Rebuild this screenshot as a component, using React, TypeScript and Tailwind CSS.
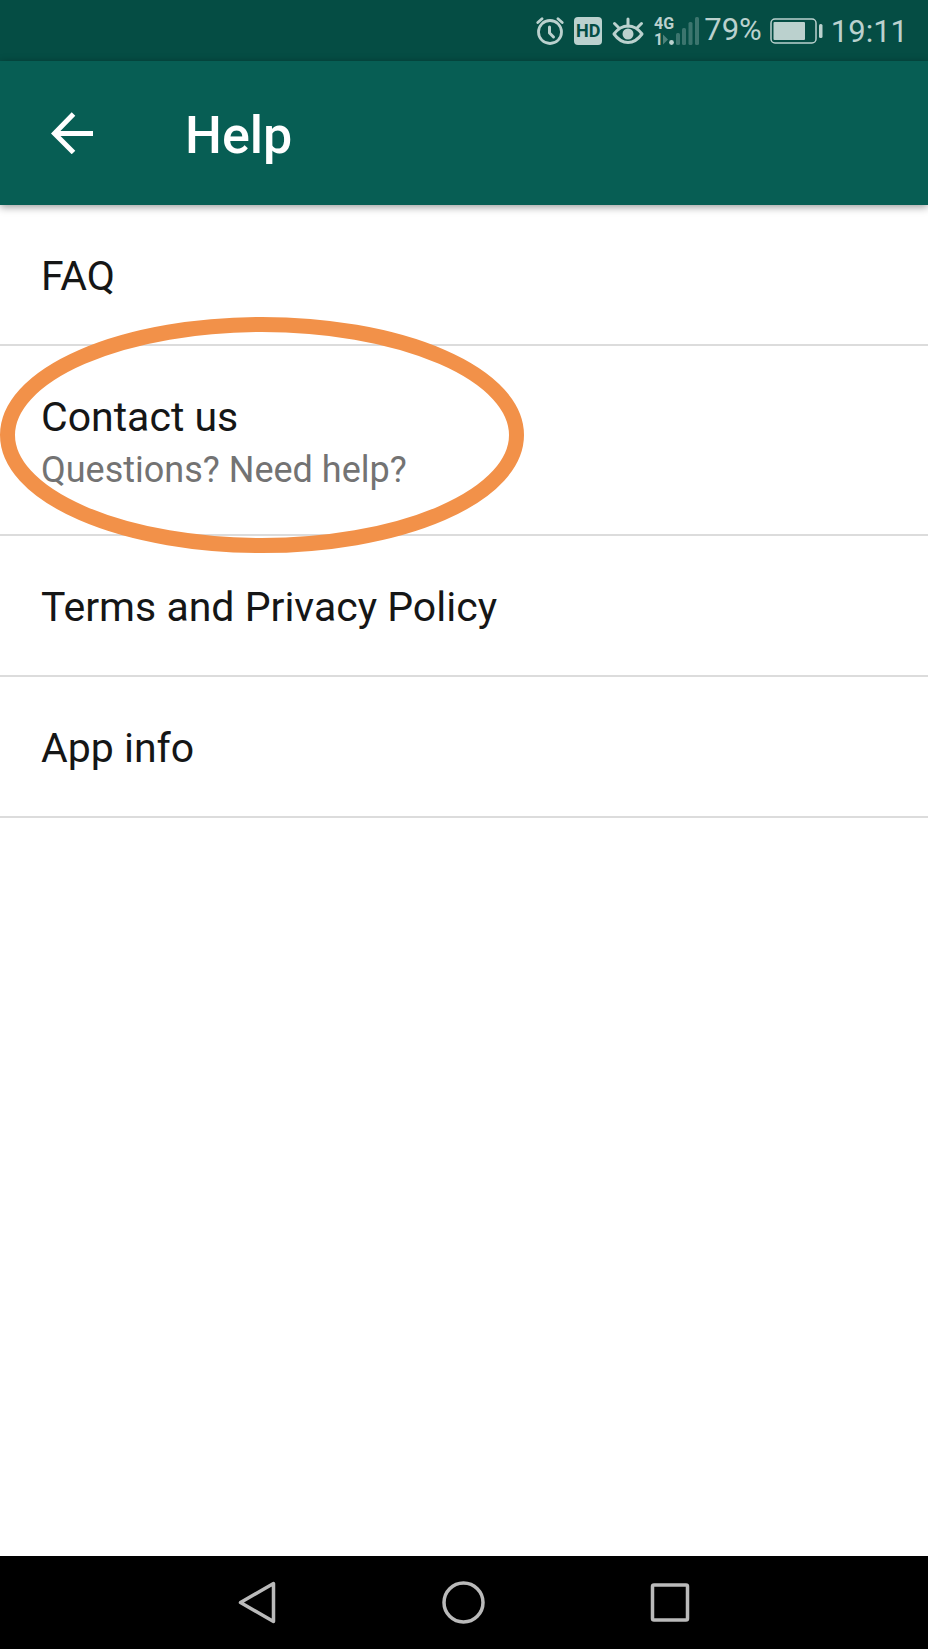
import React from 'react';

interface HelpItem {
  title: string;
  subtitle?: string;
  highlighted?: boolean;
}

const helpItems: HelpItem[] = [
  { title: 'FAQ' },
  { title: 'Contact us', subtitle: 'Questions? Need help?', highlighted: true },
  { title: 'Terms and Privacy Policy' },
  { title: 'App info' },
];

const AlarmIcon = () => (
  <svg width="28" height="28" viewBox="0 0 28 28" fill="none" stroke="currentColor" strokeLinecap="round" strokeLinejoin="round">
    <circle cx="14" cy="15" r="11.5" strokeWidth="2.8" />
    <path d="M13.5 10v6l4 4" strokeWidth="3" />
    <path d="M1.8 5.5 6 1.8M26.2 5.5 22 1.8" strokeWidth="2.8" />
  </svg>
);

const EyeIcon = () => (
  <svg width="32" height="28" viewBox="0 0 32 28" fill="none" stroke="currentColor" strokeLinecap="round" strokeLinejoin="round">
    <path d="M2 17C6 11.5 10.5 9 16 9S26 11.5 30 17C26 22.5 21.5 25.5 16 25.5S6 22.5 2 17Z" strokeWidth="3" />
    <circle cx="16" cy="17" r="5.5" fill="currentColor" stroke="none" />
    <path d="M16 9V2M6.5 10.5 2.5 6.5M25.5 10.5 29.5 6.5" strokeWidth="3" />
  </svg>
);

// Network type, active SIM and signal strength
const SignalIcon = () => (
  <svg width="46" height="42" viewBox="0 -6 46 42" fill="currentColor">
    <g fontWeight="700" fontFamily="Roboto, sans-serif">
      <text x="0" y="13" fontSize="16">4G</text>
      <text x="0" y="29" fontSize="16">1</text>
    </g>
    <path d="M9 18.5v10l5-5Z" opacity="0.4" />
    <circle cx="17.5" cy="26.5" r="2.4" />
    <g opacity="0.3">
      <rect x="22" y="17" width="4" height="12" rx="1.5" />
      <rect x="28" y="12" width="4" height="17" rx="1.5" />
      <rect x="34.5" y="6" width="4" height="23" rx="1.5" />
      <rect x="41" y="1" width="4" height="28" rx="1.5" />
    </g>
  </svg>
);

const BatteryIcon = () => (
  <svg width="53" height="26" viewBox="0 0 53 26" fill="none">
    <rect x="1" y="1" width="45" height="24" rx="4" stroke="currentColor" strokeWidth="1.5" />
    <rect x="3.5" y="4" width="31.5" height="18" rx="1" fill="currentColor" />
    <rect x="49" y="6" width="3.5" height="14" rx="1.5" fill="currentColor" />
  </svg>
);

const StatusBar = () => (
  <div className="flex h-[61px] items-center justify-end bg-[#054d44] pr-5 text-[31px] text-[#bbd1ce]">
    <div className="flex items-center gap-2.5">
      <AlarmIcon />
      <span className="flex h-7 w-7 items-center justify-center rounded bg-[#bbd1ce] text-lg font-bold text-[#054d44]">HD</span>
      <EyeIcon />
      <SignalIcon />
    </div>
    <span className="ml-1">79%</span>
    <span className="mx-2">
      <BatteryIcon />
    </span>
    <span className="pt-1">19:11</span>
  </div>
);

const HelpRow: React.FC<{ item: HelpItem }> = ({ item }) => (
  <li className="relative border-b-2 border-[#dcdcdc]">
    <button type="button" className="block w-full px-[41px] pt-[46px] pb-[42px] text-left">
      <span className="block text-[41px] leading-[51px] text-[#151616]">{item.title}</span>
      {item.subtitle && (
        <span className="mt-1.5 block text-[36px] leading-[43px] text-[#737373]">{item.subtitle}</span>
      )}
    </button>
    {item.highlighted && (
      <svg
        className="pointer-events-none absolute -top-[29px] left-0 z-10"
        width="524"
        height="236"
        viewBox="0 0 524 236"
        fill="none"
      >
        <ellipse cx="262" cy="118" rx="254.5" ry="110.5" stroke="#f29149" strokeWidth="15" />
      </svg>
    )}
  </li>
);

const NavBar = () => (
  <nav className="grid h-[93px] grid-cols-3 items-center justify-items-center bg-black px-[154px] text-[#bababa]">
    <button type="button" aria-label="Back">
      <svg width="44" height="44" viewBox="0 0 44 44" fill="none" stroke="currentColor" strokeWidth="3.5" strokeLinejoin="round">
        <path d="M38.5 2.5v38L5.5 21.5Z" />
      </svg>
    </button>
    <button type="button" aria-label="Home">
      <svg width="44" height="44" viewBox="0 0 44 44" fill="none" stroke="currentColor" strokeWidth="3.5">
        <circle cx="21.5" cy="21.5" r="19.5" />
      </svg>
    </button>
    <button type="button" aria-label="Recent apps">
      <svg width="44" height="44" viewBox="0 0 44 44" fill="none" stroke="currentColor" strokeWidth="3.5">
        <rect x="3.5" y="4" width="35" height="35" rx="1.5" />
      </svg>
    </button>
  </nav>
);

export default function App() {
  return (
    <div className="flex min-h-screen flex-col bg-white font-[Roboto,sans-serif]">
      <StatusBar />
      <header className="relative flex h-36 items-center bg-[#075e54] px-[51px] text-white shadow-[0_2px_8px_rgba(0,0,0,0.4)]">
        <button type="button" aria-label="Go back">
          <svg width="42" height="42" viewBox="0 0 42 42" fill="none" stroke="currentColor" strokeWidth="5">
            <path d="M22.5 2 3.5 21.5l19 19M4 21.5h38" />
          </svg>
        </button>
        <h1 className="ml-[92px] pt-1.5 text-[52px] font-medium">Help</h1>
      </header>
      <main className="flex-1">
        <ul>
          {helpItems.map((item) => (
            <HelpRow key={item.title} item={item} />
          ))}
        </ul>
      </main>
      <NavBar />
    </div>
  );
}
